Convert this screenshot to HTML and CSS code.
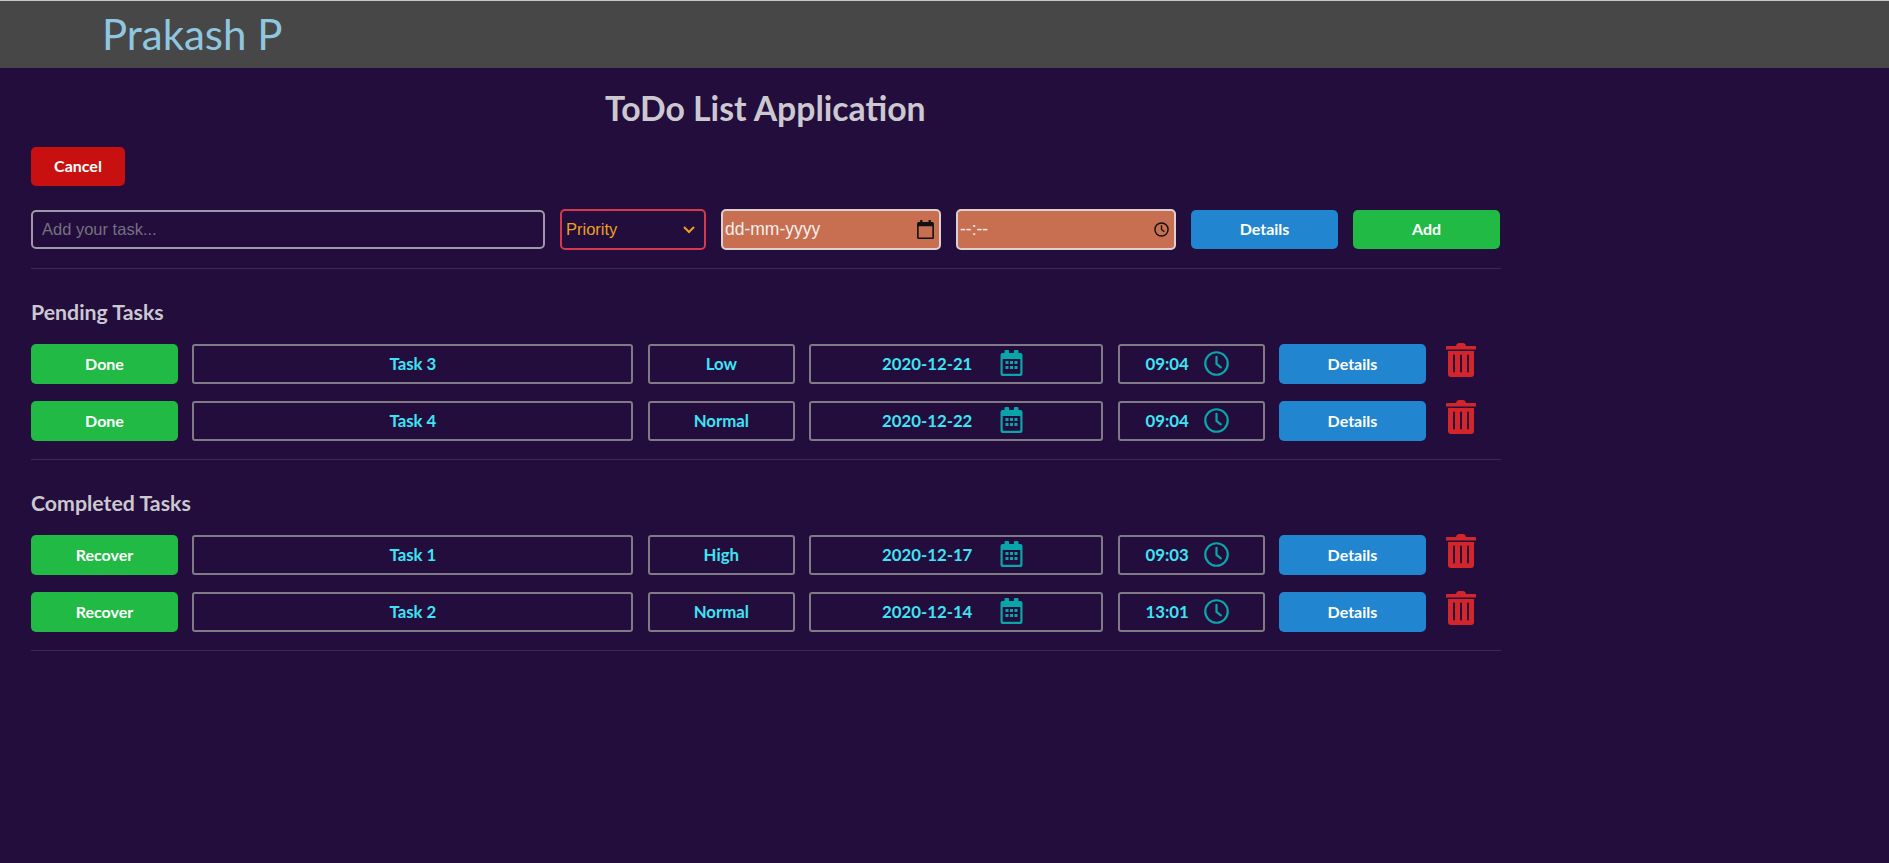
FILE: index.html
```html
<!DOCTYPE html>
<html lang="en">
<head>
  <meta charset="UTF-8">
  <title>ToDo List Application</title>
  <link rel="stylesheet" href="styles.css">
</head>
<body>
  <svg class="icon-defs" width="0" height="0">
    <symbol id="ic-cal" viewBox="0 0 22 26">
      <path fill="currentColor" fill-rule="evenodd" d="M5 0h2.600a1 1 0 0 1 1 1v2h4.800V1a1 1 0 0 1 1-1H17a1 1 0 0 1 1 1v2h2a2 2 0 0 1 2 2v19a2 2 0 0 1-2 2H2a2 2 0 0 1-2-2V5a2 2 0 0 1 2-2h2V1a1 1 0 0 1 1-1zM2.200 9v14a.8.8 0 0 0 .8.8h16a.8.8 0 0 0 .8-.8V9z"/>
      <path fill="currentColor" d="M5 11h3v3H5zM9.500 11h3v3h-3zM14 11h3v3h-3zM5 16h3v3H5zM9.500 16h3v3h-3zM14 16h3v3h-3z"/>
    </symbol>
    <symbol id="ic-clock" viewBox="0 0 26 26">
      <circle cx="13" cy="13" r="11.700" fill="none" stroke="currentColor" stroke-width="2.300"/>
      <path fill="none" stroke="currentColor" stroke-width="2.300" stroke-linecap="round" d="M13 6v7.500l4.500 3.500"/>
    </symbol>
    <symbol id="ic-trash" viewBox="0 0 30 34">
      <path fill="currentColor" fill-rule="evenodd" d="M10.500 1.500Q11 0 13 0h4q2 0 2.500 1.500L20 3h9a1 1 0 0 1 1 1v2.500H0V4a1 1 0 0 1 1-1h9zM2 8h26v23a3 3 0 0 1-3 3H5a3 3 0 0 1-3-3zM8 11.500a1 1 0 0 0-1 1v16a1 1 0 0 0 2 0v-16a1 1 0 0 0-1-1zM15 11.500a1 1 0 0 0-1 1v16a1 1 0 0 0 2 0v-16a1 1 0 0 0-1-1zM22 11.500a1 1 0 0 0-1 1v16a1 1 0 0 0 2 0v-16a1 1 0 0 0-1-1z"/>
    </symbol>
  </svg>

  <header class="topbar">
    <div class="brand">Prakash P</div>
  </header>

  <main class="content">
    <h1 class="page-title">ToDo List Application</h1>
    <button class="btn btn-red btn-cancel">Cancel</button>

    <div class="add-row">
      <div class="field field-task">Add your task...</div>
      <div class="field field-priority">
        <span>Priority</span>
        <svg class="chev" viewBox="0 0 12 8" width="12" height="8"><path fill="none" stroke="currentColor" stroke-width="2" d="M1 1l5 5 5-5"/></svg>
      </div>
      <div class="field field-date">
        <span class="date-text">dd-mm-yyyy</span>
        <svg class="picker" viewBox="0 0 16 18" width="17" height="19"><path fill="#111" fill-rule="evenodd" d="M3 0h2v2h6V0h2v2h1.500A1.500 1.500 0 0 1 16 3.500v13a1.500 1.500 0 0 1-1.500 1.500h-13A1.500 1.500 0 0 1 0 16.500v-13A1.500 1.500 0 0 1 1.500 2H3zM1.500 6v10.500h13V6z"/></svg>
      </div>
      <div class="field field-date">
        <span class="date-text">--:--</span>
        <svg class="picker" viewBox="0 0 16 16" width="15" height="15"><circle cx="8" cy="8" r="7" fill="none" stroke="#111" stroke-width="1.500"/><path fill="none" stroke="#111" stroke-width="1.400" d="M8 3.500V8l3 2.500"/></svg>
      </div>
      <button class="btn btn-blue">Details</button>
      <button class="btn btn-green">Add</button>
    </div>
    <hr class="rule">

    <h2 class="section-title">Pending Tasks</h2>
    <div class="task-row">
      <button class="btn btn-green">Done</button>
      <div class="cell cell-name">Task 3</div>
      <div class="cell cell-small">Low</div>
      <div class="cell cell-date">2020-12-21 <svg class="ic ic-cal"><use href="#ic-cal"/></svg></div>
      <div class="cell cell-small cell-time">09:04 <svg class="ic ic-clock"><use href="#ic-clock"/></svg></div>
      <button class="btn btn-blue">Details</button>
      <svg class="ic-trash"><use href="#ic-trash"/></svg>
    </div>
    <div class="task-row">
      <button class="btn btn-green">Done</button>
      <div class="cell cell-name">Task 4</div>
      <div class="cell cell-small">Normal</div>
      <div class="cell cell-date">2020-12-22 <svg class="ic ic-cal"><use href="#ic-cal"/></svg></div>
      <div class="cell cell-small cell-time">09:04 <svg class="ic ic-clock"><use href="#ic-clock"/></svg></div>
      <button class="btn btn-blue">Details</button>
      <svg class="ic-trash"><use href="#ic-trash"/></svg>
    </div>
    <hr class="rule">

    <h2 class="section-title">Completed Tasks</h2>
    <div class="task-row">
      <button class="btn btn-green">Recover</button>
      <div class="cell cell-name">Task 1</div>
      <div class="cell cell-small">High</div>
      <div class="cell cell-date">2020-12-17 <svg class="ic ic-cal"><use href="#ic-cal"/></svg></div>
      <div class="cell cell-small cell-time">09:03 <svg class="ic ic-clock"><use href="#ic-clock"/></svg></div>
      <button class="btn btn-blue">Details</button>
      <svg class="ic-trash"><use href="#ic-trash"/></svg>
    </div>
    <div class="task-row">
      <button class="btn btn-green">Recover</button>
      <div class="cell cell-name">Task 2</div>
      <div class="cell cell-small">Normal</div>
      <div class="cell cell-date">2020-12-14 <svg class="ic ic-cal"><use href="#ic-cal"/></svg></div>
      <div class="cell cell-small cell-time">13:01 <svg class="ic ic-clock"><use href="#ic-clock"/></svg></div>
      <button class="btn btn-blue">Details</button>
      <svg class="ic-trash"><use href="#ic-trash"/></svg>
    </div>
    <hr class="rule">
  </main>
</body>
</html>
```

FILE: styles.css
```css
* {
  box-sizing: border-box;
}

html, body {
  height: 100%;
}

body {
  margin: 0;
  background: #220d3d;
  font-family: Lato, sans-serif;
  overflow: hidden;
}

.icon-defs {
  position: absolute;
}

/* Top bar */
.topbar {
  height: 68px;
  background: #474747;
  border-top: 1px solid #c8c8c8;
  padding-left: 102px;
}

.brand {
  color: #8fc6e0;
  font-size: 42px;
  line-height: 66px;
}

/* Main area */
.content {
  width: 1501px;
  padding-left: 31px;
}

.page-title {
  margin: 0;
  padding: 18px 0 0 574px;
  color: #ccc8cf;
  font-size: 33.750px;
  line-height: 44px;
  font-weight: 700;
}

.btn {
  display: block;
  width: 147px;
  height: 39px;
  padding: 0 0 2px;
  flex: none;
  border: none;
  border-radius: 5px;
  color: #fff;
  font-family: Lato, sans-serif;
  font-size: 16px;
  font-weight: 700;
}

.btn-red { background: #c91010; }
.btn-blue { background: #2185d0; }
.btn-green { background: #21ba45; }

.btn-cancel {
  width: 94px;
  margin-top: 17px;
}

/* Add form */
.add-row {
  display: flex;
  align-items: center;
  gap: 15px;
  margin-top: 23px;
  height: 41px;
}

.field {
  display: flex;
  align-items: center;
  justify-content: space-between;
  border-radius: 5px;
  font-family: "Liberation Sans", sans-serif;
  font-size: 16.500px;
}

.field-task {
  width: 514px;
  height: 39px;
  padding-left: 9px;
  border: 2px solid #9f98a8;
  color: #77707f;
}

.field-priority {
  width: 146px;
  height: 41px;
  padding: 0 9px 0 4px;
  border: 2px solid #d43a4c;
  color: #eea020;
}

.field-date {
  width: 220px;
  height: 41px;
  padding: 0 5px 0 2px;
  border: 2px solid #dcd0d0;
  background: #c76f50;
  color: #f4eeee;
}

.date-text {
  font-size: 17.500px;
}

.rule {
  margin: 18px 0 0;
  height: 1px;
  border: none;
  background: #3a2a55;
  width: 1470px;
}

.section-title {
  margin: 30px 0 19px;
  color: #ccc8cf;
  font-size: 21.300px;
  line-height: 26px;
  font-weight: 700;
}

/* Task rows */
.task-row {
  display: flex;
  gap: 14.400px;
  align-items: flex-start;
  margin-bottom: 17px;
}

.task-row .btn {
  height: 40px;
}

.cell {
  display: flex;
  align-items: center;
  justify-content: center;
  gap: 15px;
  height: 40px;
  padding-bottom: 2px;
  border: 2px solid #7f7a85;
  border-radius: 3px;
  color: #3fe4f4;
  font-size: 16.800px;
  font-weight: 700;
  white-space: nowrap;
}

.cell-name { width: 441px; }
.cell-small { width: 147px; }

.cell-date {
  width: 294px;
  gap: 28px;
  padding-right: 7px;
}

.cell-time {
  padding-right: 8px;
}

.ic {
  color: #0aa5a8;
  flex: none;
}

.ic-cal {
  width: 23px;
  height: 26px;
}

.ic-clock {
  width: 25px;
  height: 25px;
}

.ic-trash {
  width: 30px;
  height: 34px;
  margin-top: -1px;
  margin-left: 5.600px;
  color: #d2262c;
}
```
